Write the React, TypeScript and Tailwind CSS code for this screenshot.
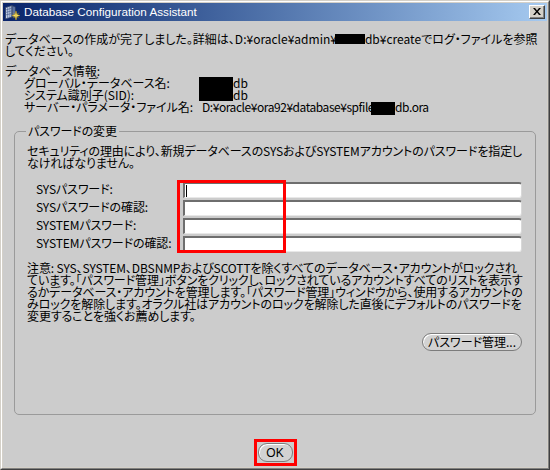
import React from "react";

function TitleIcon() {
  return (
    <svg width="16" height="16" viewBox="0 0 16 16">
      <path d="M1.5 3.5 L8 1.5 L8 13 L1.5 15 Z" fill="#c8d4e8" stroke="#2a3a60" strokeWidth="0.8" />
      <path d="M8 1.5 L11.5 3 L11.5 13.5 L8 13 Z" fill="#5a70a0" stroke="#2a3a60" strokeWidth="0.8" />
      <path d="M1.5 6 L8 4.2 M1.5 8.5 L8 6.8 M1.5 11 L8 9.4 M3.7 2.8 L3.7 14.4 M5.9 2.2 L5.9 13.7" stroke="#4a6090" strokeWidth="0.7" />
      <path d="M12 7 L12.8 10.6 L16 11.5 L12.8 12.4 L12 16 L11.2 12.4 L8 11.5 L11.2 10.6 Z" fill="#fff6a0" stroke="#d0a000" strokeWidth="0.5" />
      <path d="M9.3 8.8 L14.7 14.2 M14.7 8.8 L9.3 14.2" stroke="#e0b000" strokeWidth="0.6" />
    </svg>
  );
}

function CloseButton() {
  return (
    <div className="w-[16px] h-[14px] bg-[#d4d0c8] border border-t-white border-l-white border-r-[#404040] border-b-[#404040]">
      <div className="w-full h-full border-r border-b border-r-[#808080] border-b-[#808080] flex items-center justify-center">
        <svg width="8" height="7" viewBox="0 0 8 7">
          <path d="M0 0 L2 0 L4 2.5 L6 0 L8 0 L5 3.5 L8 7 L6 7 L4 4.5 L2 7 L0 7 L3 3.5 Z" fill="#000" />
        </svg>
      </div>
    </div>
  );
}

function Field({ cursor }: { cursor?: boolean }) {
  return (
    <div className="flex-1 h-[16px] bg-white border-t-2 border-l-2 border-b border-r border-t-[#6e6e6e] border-l-[#6e6e6e] border-b-[#e8e8e8] border-r-[#d8d8d8] rounded-r-[3px] flex items-center pl-[1px]">
      {cursor && <div className="w-px h-[12px] bg-black" />}
    </div>
  );
}

function Pill({ children, className }: { children: React.ReactNode; className?: string }) {
  return (
    <div
      className={
        "flex items-center justify-center rounded-[9px] border border-[#7c7c7c] bg-[#d2d2d2] shadow-[inset_1px_1px_0_#ffffff] " +
        (className ?? "")
      }
    >
      {children}
    </div>
  );
}

const noteLines = [
  "注意: SYS、SYSTEM、DBSNMPおよびSCOTTを除くすべてのデータベース・アカウントがロックされ",
  "ています。「パスワード管理」ボタンをクリックし、ロックされているアカウントすべてのリストを表示す",
  "るかデータベース・アカウントを管理します。「パスワード管理」ウィンドウから、使用するアカウントの",
  "みロックを解除します。オラクル社はアカウントのロックを解除した直後にデフォルトのパスワードを",
  "変更することを強くお薦めします。",
];

const labels = [
  "SYSパスワード:",
  "SYSパスワードの確認:",
  "SYSTEMパスワード:",
  "SYSTEMパスワードの確認:",
];

export default function App() {
  return (
    <div className="w-[550px] h-[470px] bg-[#d4d0c8] border border-t-[#d4d0c8] border-l-[#d4d0c8] border-r-[#404040] border-b-[#404040] font-['Noto_Sans_CJK_JP',sans-serif] text-[12px] leading-[12px] text-black [font-feature-settings:'palt'] whitespace-nowrap">
      <div className="h-full border border-t-white border-l-white border-r-[#808080] border-b-[#808080] p-px flex flex-col">
        {/* Title bar */}
        <div className="h-[18px] flex items-center bg-linear-to-r from-[#0a246a] to-[#a6caf0] pl-[1px] pr-[2px]">
          <TitleIcon />
          <span className="ml-[4px] text-white font-['Liberation_Sans',sans-serif] text-[11.7px] leading-[14px]">
            Database Configuration Assistant
          </span>
          <div className="ml-auto">
            <CloseButton />
          </div>
        </div>

        {/* Content */}
        <div className="flex-1 bg-[#cccccc] flex flex-col pt-[12px]">
          <div className="pl-[2px]">
            <div className="flex items-center h-[12px]">
              <span>データベースの作成が完了しました。詳細は、D:¥oracle¥admin¥</span>
              <span className="inline-block w-[30px] h-[10px] bg-black -ml-[2px]" />
              <span>db¥createでログ・ファイルを参照</span>
            </div>
            <div>してください。</div>
            <div className="mt-[8px]">データベース情報:</div>
            <div className="grid grid-cols-[175px_1fr] pl-[19px]">
              <div>グローバル・データベース名:</div>
              <div className="flex items-end h-[12px]">
                <span className="inline-block w-[34px] h-[12px] bg-black" />
                <span>db</span>
              </div>
              <div>システム識別子(SID):</div>
              <div className="flex items-end h-[12px]">
                <span className="inline-block w-[34px] h-[12px] bg-black" />
                <span>db</span>
              </div>
              <div>サーバー・パラメータ・ファイル名:</div>
              <div className="flex items-center h-[12px] pl-[3px] tracking-[-0.45px]">
                <span>D:¥oracle¥ora92¥database¥spfile</span>
                <span className="inline-block w-[24px] h-[13px] bg-black -ml-[3px] mt-[3px]" />
                <span>db.ora</span>
              </div>
            </div>
          </div>

          {/* Group box */}
          <fieldset className="min-w-0 mx-[11px] mt-[12px] border border-[#9a9a9a] rounded-[5px] pl-[12px] pr-[13px] pt-[8px] pb-[63px] tracking-[-0.1px]">
            <legend className="px-[2px] -ml-[1px]">パスワードの変更</legend>
            <div>セキュリティの理由により、新規データベースのSYSおよびSYSTEMアカウントのパスワードを指定し</div>
            <div>なければなりません。</div>

            <div className="relative mt-[13px] flex flex-col gap-[2px]">
              {labels.map((l, i) => (
                <div key={l} className="flex items-center h-[16px]">
                  <div className="w-[156px] pl-[9px] -mt-[3px]">{l}</div>
                  <Field cursor={i === 0} />
                </div>
              ))}
              <div className="absolute left-[150px] top-[-2px] w-[109px] h-[73px] border-[3px] border-[#ff0000] z-10 pointer-events-none" />
            </div>

            <div className="mt-[10px]">
              {noteLines.map((l) => (
                <div key={l}>{l}</div>
              ))}
            </div>

            <div className="flex justify-end mt-[11px]">
              <Pill className="w-[100px] h-[18px] tracking-normal">パスワード管理...</Pill>
            </div>
          </fieldset>

          <div className="flex justify-center mt-[24px]">
            <div className="border-[3px] border-[#ff0000] p-px">
              <Pill className="w-[35px] h-[19px] font-['Liberation_Sans',sans-serif] text-[12px]">OK</Pill>
            </div>
          </div>
        </div>
      </div>
    </div>
  );
}
